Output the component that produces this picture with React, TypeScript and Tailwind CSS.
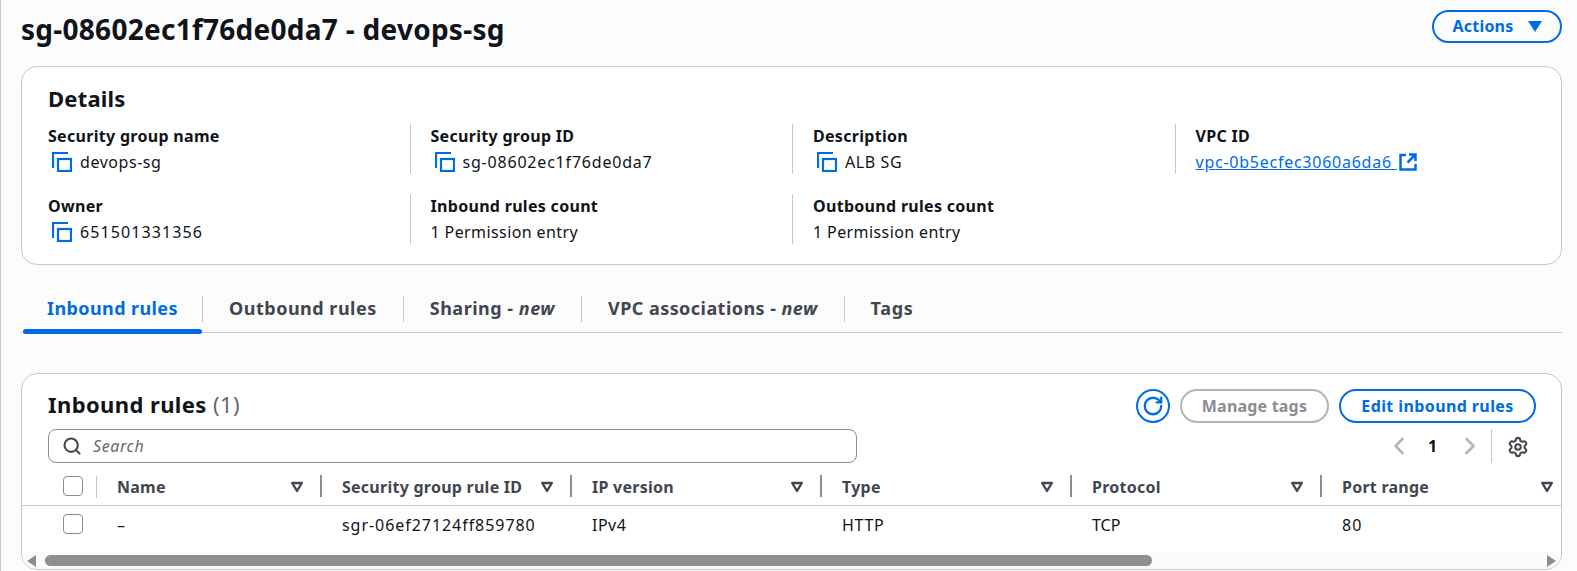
import React from 'react';
import { RotateCw, Search, Settings, ChevronLeft, ChevronRight } from 'lucide-react';

const details = [
  [
    { label: 'Security group name', value: 'devops-sg', copy: true, track: 'tracking-[0.55px]' },
    { label: 'Security group ID', value: 'sg-08602ec1f76de0da7', copy: true, track: 'tracking-[0.8px]' },
    { label: 'Description', value: 'ALB SG', copy: true, track: 'tracking-[0.6px]' },
    { label: 'VPC ID', value: 'vpc-0b5ecfec3060a6da6', link: true, track: 'tracking-[0.75px]' },
  ],
  [
    { label: 'Owner', value: '651501331356', copy: true, track: 'tracking-[1.1px]' },
    { label: 'Inbound rules count', value: '1 Permission entry', track: 'tracking-[0.4px]' },
    { label: 'Outbound rules count', value: '1 Permission entry', track: 'tracking-[0.4px]' },
  ],
];

// widths are the header cell widths, first one is shorter because of the checkbox column
const columns = [
  { name: 'Name', value: '–', width: 'w-[225px]', track: '' },
  { name: 'Security group rule ID', value: 'sgr-06ef27124ff859780', width: 'w-[250px]', track: 'tracking-[0.95px]' },
  { name: 'IP version', value: 'IPv4', width: 'w-[250px]', track: 'tracking-[0.5px]' },
  { name: 'Type', value: 'HTTP', width: 'w-[250px]', track: 'tracking-[0.7px]' },
  { name: 'Protocol', value: 'TCP', width: 'w-[250px]', track: '' },
  { name: 'Port range', value: '80', width: 'w-[250px]', track: 'tracking-[1px]' },
];

function CopyIcon() {
  return (
    <svg className="w-5 h-5 shrink-0" viewBox="0 0 20 20" fill="none" stroke="#006ce0" strokeWidth="2.2">
      <path d="M1 16V1h15" />
      <rect x="6" y="7" width="13" height="12" />
    </svg>
  );
}

function ExternalIcon() {
  return (
    <svg className="w-[18px] h-[18px] inline-block ml-[2px] align-[-3px]" viewBox="0 0 18 18" fill="none" stroke="#006ce0" strokeWidth="2.5">
      <path d="M7 2H1.5v14.5h15V11" />
      <path d="M10 1.5h6.5V8M16 2L8.5 9.5" />
    </svg>
  );
}

function FilterArrow() {
  return (
    <svg className="w-4 h-4 shrink-0" viewBox="0 0 16 16" fill="none" stroke="#424650" strokeWidth="2.4" strokeLinejoin="round">
      <path d="M3.2 4h9.6L8 12z" />
    </svg>
  );
}

function Checkbox() {
  return <div className="w-5 h-5 rounded-[4px] border border-[#8c8c94] bg-white shrink-0" />;
}

export default function App() {
  return (
    <div className="w-[1577px] h-[571px] overflow-hidden bg-[#fcfcfd] border-l border-[#c6c6cd] pl-5 pr-[15px] text-[#0f141a] font-['Noto_Sans',sans-serif]">
      {/* Header */}
      <div className="h-[66px] flex items-center justify-between">
        <h1 className="text-[28px] leading-[36px] font-bold -mt-2 tracking-[0.27px]">sg-08602ec1f76de0da7 - devops-sg</h1>
        <button className="w-[130px] h-[33px] -mt-[14px] rounded-full border-2 border-[#006ce0] text-[#006ce0] text-[16px] tracking-[0.2px] font-bold flex items-center justify-center gap-[14px] pl-[2px]">
          Actions
          <svg className="w-4 h-[13px]" viewBox="0 0 16 13" fill="#006ce0"><path d="M1 1h14L8 12z" /></svg>
        </button>
      </div>

      {/* Details */}
      <div className="h-[199px] rounded-[16px] border border-[#c6c6cd] bg-white pl-[26px] pt-[16px]">
        <h2 className="text-[22px] leading-[30px] font-bold tracking-[0.2px]">Details</h2>
        <div className="mt-[11px] flex flex-col gap-5">
          {details.map((row, i) => (
            <div key={i} className="flex">
              {row.map((item, j) => (
                <div key={j} className={`shrink-0 h-[50px] ${j > 0 ? 'w-[382.5px] border-l border-[#c6c6cd] pl-[20px]' : 'w-[361.5px]'}`}>
                  <div className="text-[16px] leading-[24px] font-bold tracking-[0.3px]">{item.label}</div>
                  <div className={`flex items-center gap-2 text-[16px] leading-[26px] pt-[1px] ${item.track}`}>
                    {item.copy && <span className="pl-[4px]"><CopyIcon /></span>}
                    {item.link ? (
                      <a className="text-[#006ce0] underline">
                        {item.value} <ExternalIcon />
                      </a>
                    ) : (
                      <span>{item.value}</span>
                    )}
                  </div>
                </div>
              ))}
            </div>
          ))}
        </div>
      </div>

      {/* Tabs */}
      <div className="mt-[28px] h-[40px] flex border-b border-[#c6c6cd] text-[18px] leading-[24px] font-bold text-[#424650]">
        <div className="relative w-[181px] h-[40px] flex items-start pt-[3px] pl-[26px] text-[#006ce0] tracking-[0.4px]">
          Inbound rules
          <div className="absolute left-[2px] right-0 bottom-[-1px] h-[5px] rounded-full bg-[#006ce0]" />
        </div>
        <Tab track="tracking-[0.5px]">Outbound rules</Tab>
        <Tab track="tracking-[0.5px]">
          Sharing - <i className="font-bold">new</i>
        </Tab>
        <Tab track="tracking-[0.45px]">
          VPC associations - <i className="font-bold">new</i>
        </Tab>
        <Tab track="tracking-[0.7px]">Tags</Tab>
      </div>

      {/* Inbound rules table */}
      <div className="mt-[40px] h-[197px] rounded-[16px] border border-[#c6c6cd] bg-white overflow-hidden flex flex-col">
        <div className="flex items-start justify-between pl-[26px] pr-[25px] pt-[15px]">
          <h2 className="text-[22px] leading-[34px] font-bold -mt-[2px] tracking-[0.4px]">
            Inbound rules <span className="font-normal text-[#656871]">(1)</span>
          </h2>
          <div className="flex items-center gap-[10px]">
            <div className="w-[34px] h-[34px] rounded-full border-2 border-[#006ce0] flex items-center justify-center">
              <RotateCw className="w-[22px] h-[22px] text-[#006ce0]" strokeWidth={2.5} />
            </div>
            <div className="w-[149px] h-[34px] rounded-full border-2 border-[#b4b4bb] text-[#8c8c94] text-[16px] tracking-[0.2px] font-bold flex items-center justify-center">
              Manage tags
            </div>
            <div className="w-[197px] h-[34px] rounded-full border-2 border-[#006ce0] text-[#006ce0] text-[16px] tracking-[0.4px] font-bold flex items-center justify-center">
              Edit inbound rules
            </div>
          </div>
        </div>

        <div className="flex items-center pl-[26px] pr-[25px] mt-[6px] h-[34px]">
          <div className="w-[809px] h-[34px] rounded-[8px] border border-[#8c8c94] flex items-center pl-[13px] gap-[11px] text-[#656871] text-[16px] italic tracking-[0.6px]">
            <Search className="w-5 h-5 text-[#424650]" strokeWidth={2.5} />
            Search
          </div>
          <div className="ml-auto flex items-center h-[34px]">
            <ChevronLeft className="w-7 h-7 text-[#b4b4bb]" strokeWidth={2.25} />
            <span className="w-[43px] pr-[4px] text-center text-[16px] font-bold">1</span>
            <ChevronRight className="w-7 h-7 text-[#b4b4bb]" strokeWidth={2.25} />
            <div className="w-px h-[34px] bg-[#c6c6cd] ml-[7px]" />
            <Settings className="w-[22px] h-[22px] mt-[2px] text-[#424650] ml-[15px] mr-[7px]" strokeWidth={2.25} />
          </div>
        </div>

        <div className="mt-[10px] flex h-[33px] border-b border-[#c6c6cd] pl-[26px] min-w-0 overflow-hidden">
          <div className="w-[49px] shrink-0 flex items-start pl-[15px] pt-[3px]">
            <Checkbox />
            <div className="w-[2px] h-[22px] bg-[#c6c6cd] ml-[13px]" />
          </div>
          {columns.map((col, i) => (
            <div key={col.name} className={`${col.width} shrink-0 flex items-start justify-between pl-5 pr-[17px] pt-[2px] text-[16px] leading-[24px] font-bold tracking-[0.25px] text-[#424650] ${i < 5 ? 'relative' : ''}`}>
              {col.name}
              <span className="mt-1"><FilterArrow /></span>
              {i < 5 && <div className="absolute right-0 top-[2px] w-[2px] h-[22px] bg-[#8c8c94]" />}
            </div>
          ))}
        </div>

        <div className="flex h-[46px] pl-[26px] overflow-hidden">
          <div className="w-[49px] shrink-0 pl-[15px] pt-[8px]">
            <Checkbox />
          </div>
          {columns.map((col) => (
            <div key={col.name} className={`${col.width} shrink-0 pl-5 pt-[7px] text-[16px] leading-[24px] ${col.track}`}>
              {col.value}
            </div>
          ))}
        </div>

        {/* Scrollbar */}
        <div className="flex-1 bg-[#fbfbfb] flex items-center pl-[5px] pr-[5px] gap-[9px]">
          <svg className="w-[9px] h-[12px] shrink-0" viewBox="0 0 9 12" fill="#8c8c8c"><path d="M9 0v12L0 6z" /></svg>
          <div className="w-[1107px] h-[11px] rounded-full bg-[#8f8f8f]" />
          <svg className="w-[9px] h-[12px] shrink-0 ml-auto" viewBox="0 0 9 12" fill="#8c8c8c"><path d="M0 0v12l9-6z" /></svg>
        </div>
      </div>
    </div>
  );
}

function Tab({ children, track }: { children: React.ReactNode; track: string }) {
  return (
    <div className="flex items-start pt-[3px]">
      <div className="h-[26px] w-px bg-[#c6c6cd] mr-[26px]" />
      <span className={`pr-[26px] whitespace-pre ${track}`}>{children}</span>
    </div>
  );
}
